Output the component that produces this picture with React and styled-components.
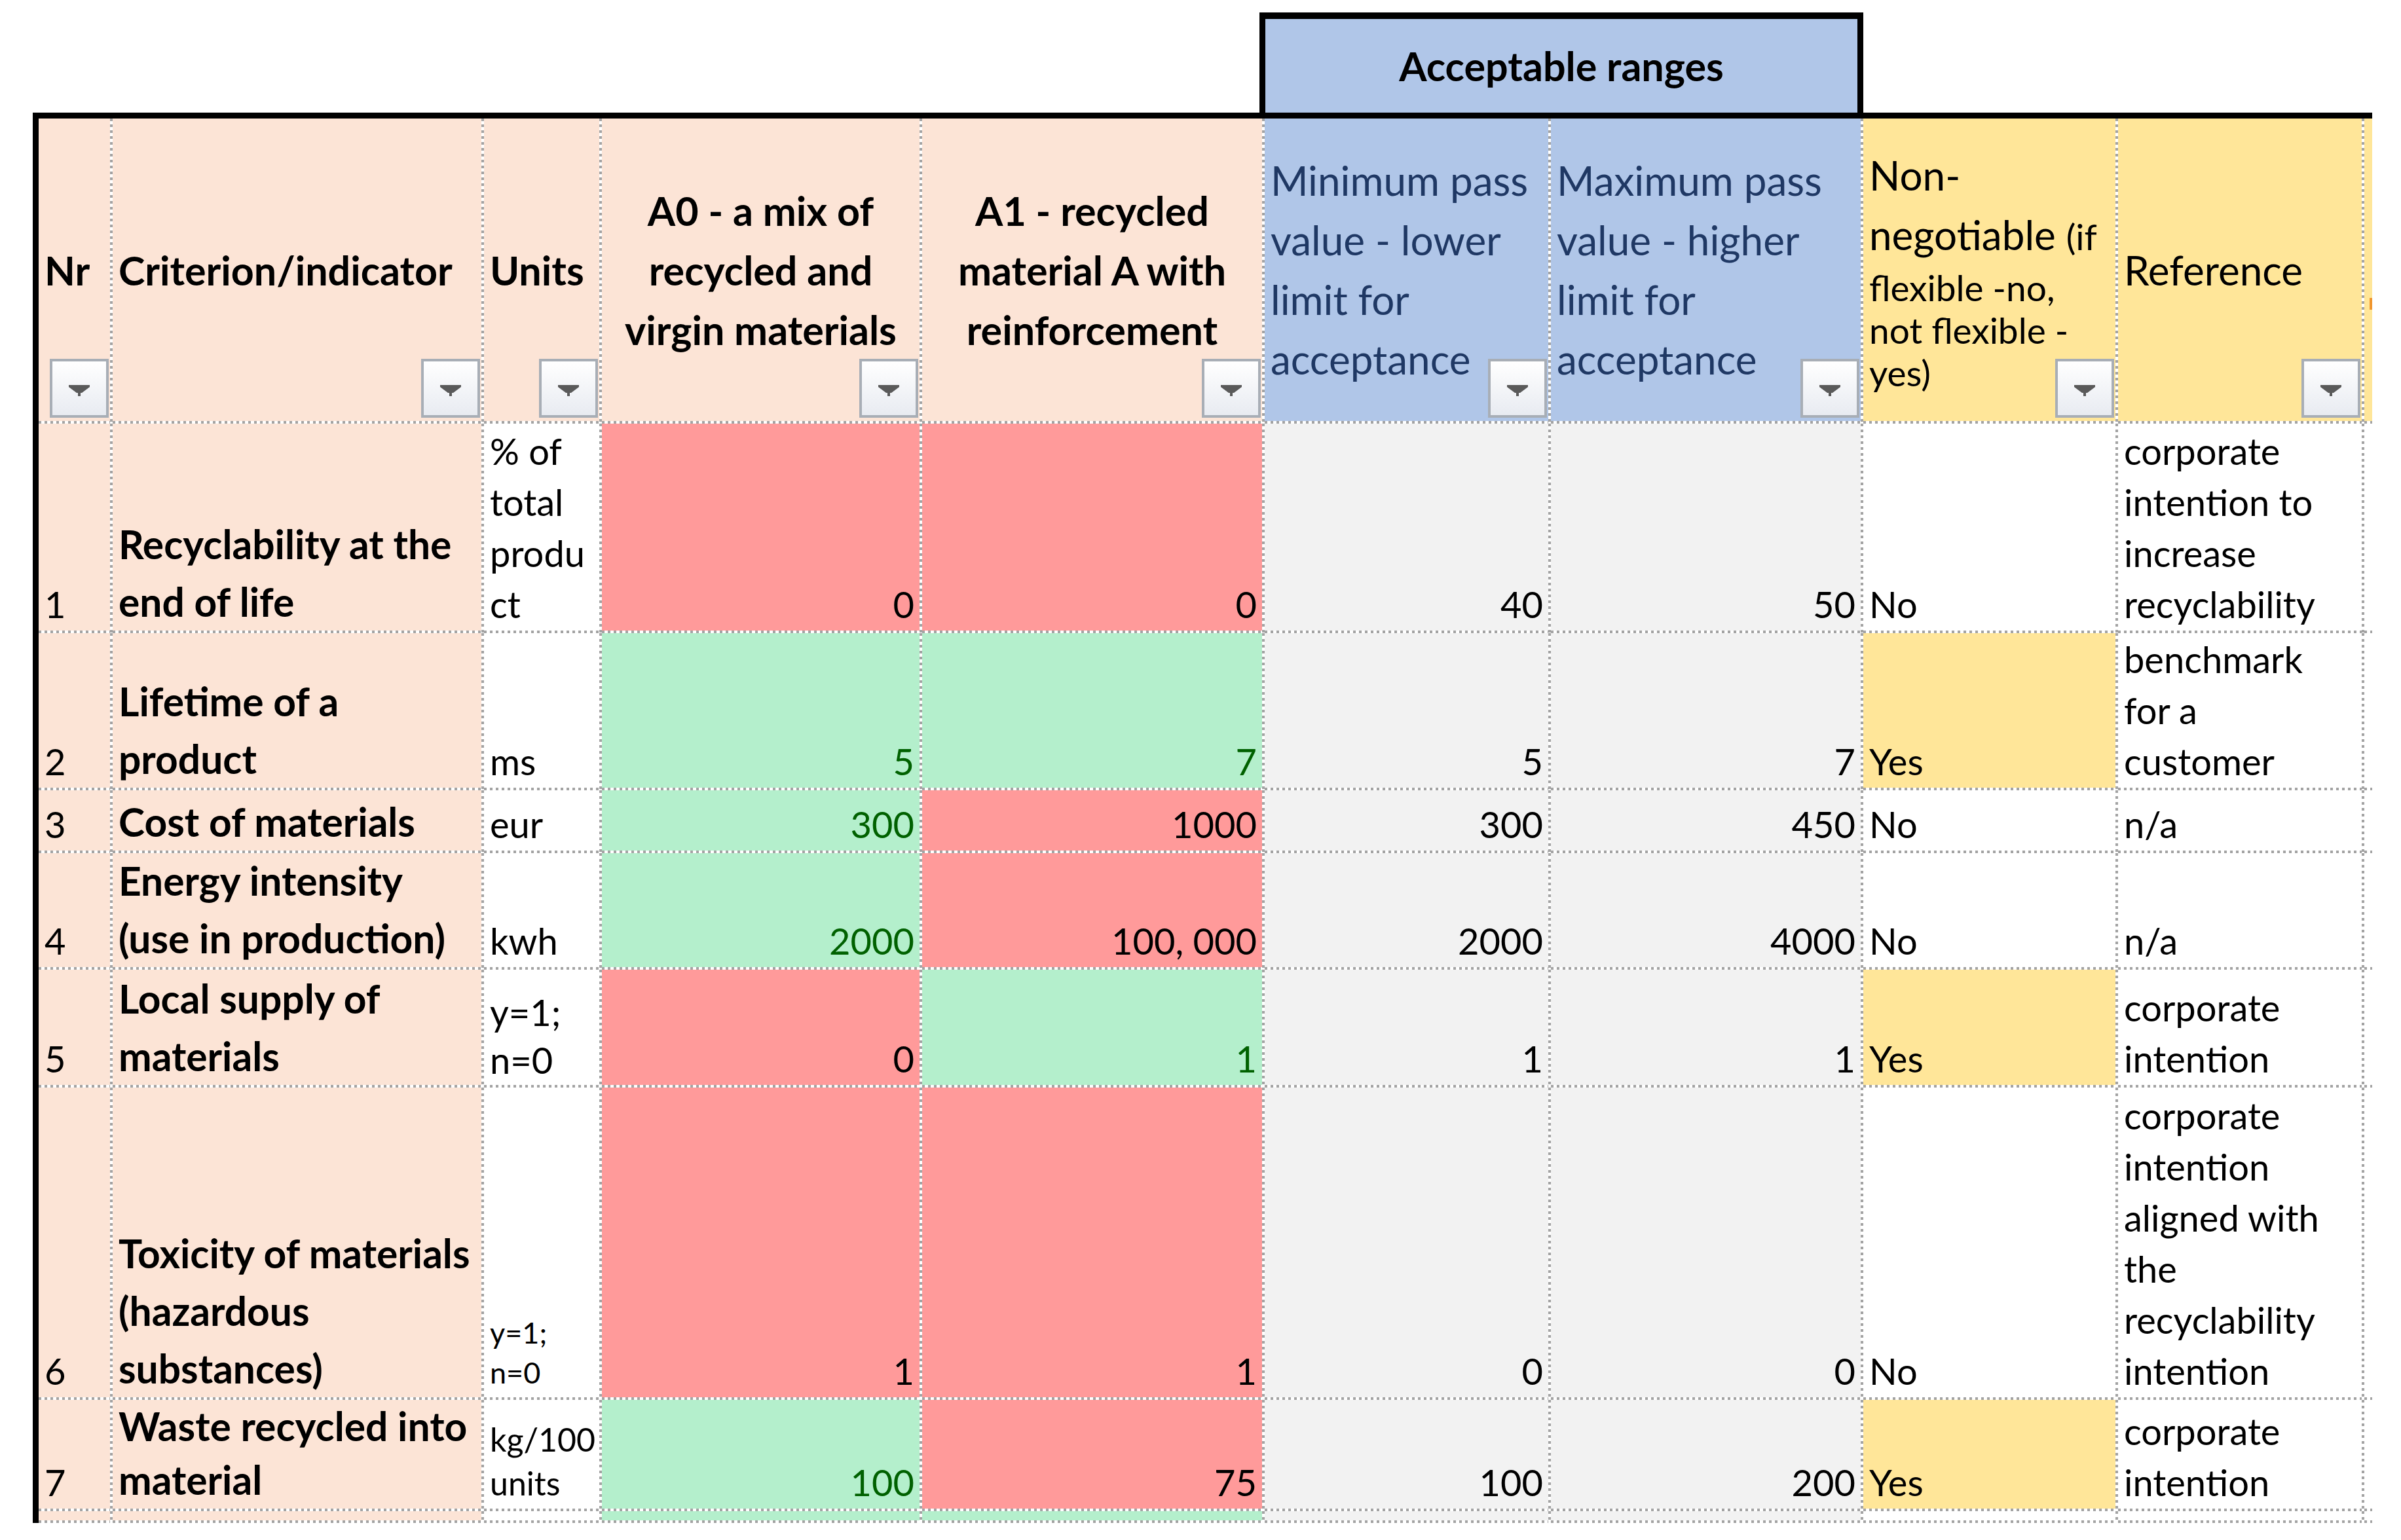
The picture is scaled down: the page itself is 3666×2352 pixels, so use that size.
import React from 'react';
import styled, { createGlobalStyle } from 'styled-components';

const FONT = `Lato, "Liberation Sans", "DejaVu Sans", sans-serif`;

const C = {
  peach: '#FCE4D6',
  blue: '#B0C6E8',
  yellow: '#FFE699',
  red: '#FF9A9A',
  green: '#B4EFCC',
  gray: '#F2F2F2',
  white: '#FFFFFF',
  dot: '#A3A3A3',
  navy: '#1F3864',
  goodText: '#006100',
};

const GlobalStyle = createGlobalStyle`
  html, body { margin: 0; padding: 0; background: #ffffff; }
  body { font-family: ${FONT}; color: #000; }
  #root { width: 3666px; height: 2352px; overflow: hidden; }
`;

const COLUMNS = [113, 567, 180, 489, 523, 437, 477, 389, 376, 80];
const COL_TEMPLATE = COLUMNS.map((w) => `${w}px`).join(' ');
const ROW_TEMPLATE = '466px 320px 240px 96px 178px 180px 477px 170px 18px';

const Page = styled.main`
  box-sizing: border-box;
  width: 3666px;
  height: 2352px;
  padding: 19px 0 0 50px;
  overflow: hidden;
  background: #fff;
`;

const GroupBand = styled.div`
  display: grid;
  grid-template-columns: 9px ${COL_TEMPLATE};
  height: 153px;
`;

const RangeBox = styled.div`
  grid-column: 7 / 9;
  margin-left: -8px;
  box-sizing: border-box;
  border: 9px solid #000;
  border-top-width: 10px;
  border-bottom: none;
  background: ${C.blue};
  display: flex;
  align-items: center;
  justify-content: center;
  font-size: 61px;
  font-weight: 700;
  line-height: 91px;
  white-space: nowrap;
`;

const Sheet = styled.div`
  display: grid;
  grid-template-columns: ${COL_TEMPLATE};
  grid-template-rows: ${ROW_TEMPLATE};
  box-sizing: border-box;
  width: 3572px;
  border-top: 9px solid #000;
  border-left: 9px solid #000;
  overflow: hidden;
`;

const ALIGN = { left: 'flex-start', right: 'flex-end', center: 'center' };

const Cell = styled.div`
  position: relative;
  box-sizing: border-box;
  min-width: 0;
  display: flex;
  flex-direction: column;
  justify-content: ${(p) => (p.$middle ? 'center' : 'flex-end')};
  align-items: ${(p) => ALIGN[p.$align || 'left']};
  padding: ${(p) =>
    p.$align === 'right' ? '0 12px 4px 4px' : p.$align === 'center' ? '0 4px 4px 0' : '0 4px 4px 9px'};
  overflow: hidden;
  white-space: nowrap;
  background:
    repeating-linear-gradient(to bottom, ${C.dot} 0 4px, #fff 4px 9px) right top / 4px 100% no-repeat,
    repeating-linear-gradient(to right, ${C.dot} 0 4px, #fff 4px 9px) left bottom / 100% 4px no-repeat,
    ${(p) => p.$bg || C.white};
`;

const Line = styled.span`
  display: block;
`;

const HeadText = styled.div`
  font-size: ${(p) => (p.$bold ? 61 : 62)}px;
  line-height: 91px;
  font-weight: ${(p) => (p.$bold ? 700 : 400)};
  color: ${(p) => p.$color || '#000'};
  text-align: ${(p) => (p.$center ? 'center' : 'left')};
`;

const SmallInline = styled.span`
  font-size: 55px;
`;

const SmallLine = styled.span`
  display: block;
  font-size: 55px;
  line-height: 65px;
`;

const CutGlyph = styled.span`
  position: absolute;
  left: 8px;
  top: 274px;
  width: 4px;
  height: 18px;
  background: #f0962e;
`;

const PlainText = styled.div`
  font-size: 56px;
  line-height: 78px;
  color: ${(p) => p.$color || '#000'};
  margin-bottom: 1px;
`;

const CriterionLine = styled.span`
  display: block;
  line-height: 64px;
`;

const CriterionText = styled.div`
  font-size: 60.5px;
  font-weight: 700;
  margin-bottom: 12px;
  ${CriterionLine} + ${CriterionLine} {
    margin-top: ${(p) => (p.$gap || 88) - 64}px;
  }
`;

const UNIT_SIZES = {
  normal: { size: 56, lh: 78, mb: 1 },
  medium: { size: 56, lh: 73, mb: 2 },
  small: { size: 50, lh: 67, mb: 5 },
  tiny: { size: 45, lh: 61, mb: 7 },
};

const UnitsText = styled.div`
  font-size: ${(p) => UNIT_SIZES[p.$kind].size}px;
  line-height: ${(p) => UNIT_SIZES[p.$kind].lh}px;
  margin-bottom: ${(p) => UNIT_SIZES[p.$kind].mb}px;
`;

const FilterButton = styled.span`
  position: absolute;
  right: 6px;
  bottom: 9px;
  width: 90px;
  height: 90px;
  box-sizing: border-box;
  border: 4px solid #a8aeb6;
  background: linear-gradient(#ffffff, #e8ebf1);
  display: flex;
  align-items: center;
  justify-content: center;
  padding-top: 6px;
`;

const FilterArrow = () => (
  <svg width="32" height="17" viewBox="0 0 32 17" aria-hidden="true">
    <polygon points="0,0 32,0 32,3 20,12 18,12 18,17 14,17 14,12 12,12 0,3" fill="#5a5a5a" />
  </svg>
);

const Filter = () => (
  <FilterButton>
    <FilterArrow />
  </FilterButton>
);

const Lines = ({ lines }) => lines.map((l, i) => <Line key={i}>{l}</Line>);

const ROWS = [
  {
    nr: '1',
    crit: ['Recyclability at the', 'end of life'],
    units: ['% of', 'total', 'produ', 'ct'],
    unitKind: 'normal',
    a0: ['0', false],
    a1: ['0', false],
    min: '40',
    max: '50',
    flag: 'No',
    ref: ['corporate', 'intention to', 'increase', 'recyclability'],
  },
  {
    nr: '2',
    crit: ['Lifetime of a', 'product'],
    units: ['ms'],
    unitKind: 'normal',
    a0: ['5', true],
    a1: ['7', true],
    min: '5',
    max: '7',
    flag: 'Yes',
    ref: ['benchmark', 'for a', 'customer'],
  },
  {
    nr: '3',
    crit: ['Cost of materials'],
    units: ['eur'],
    unitKind: 'normal',
    a0: ['300', true],
    a1: ['1000', false],
    min: '300',
    max: '450',
    flag: 'No',
    ref: ['n/a'],
  },
  {
    nr: '4',
    crit: ['Energy intensity', '(use in production)'],
    units: ['kwh'],
    unitKind: 'normal',
    a0: ['2000', true],
    a1: ['100, 000', false],
    min: '2000',
    max: '4000',
    flag: 'No',
    ref: ['n/a'],
  },
  {
    nr: '5',
    crit: ['Local supply of', 'materials'],
    units: ['y=1;', 'n=0'],
    unitKind: 'medium',
    a0: ['0', false],
    a1: ['1', true],
    min: '1',
    max: '1',
    flag: 'Yes',
    ref: ['corporate', 'intention'],
  },
  {
    nr: '6',
    crit: ['Toxicity of materials', '(hazardous', 'substances)'],
    units: ['y=1;', 'n=0'],
    unitKind: 'tiny',
    a0: ['1', false],
    a1: ['1', false],
    min: '0',
    max: '0',
    flag: 'No',
    ref: ['corporate', 'intention', 'aligned with', 'the', 'recyclability', 'intention'],
  },
  {
    nr: '7',
    crit: ['Waste recycled into', 'material'],
    critGap: 82,
    units: ['kg/100', 'units'],
    unitKind: 'small',
    a0: ['100', true],
    a1: ['75', false],
    min: '100',
    max: '200',
    flag: 'Yes',
    ref: ['corporate', 'intention'],
  },
];

const ScoreCell = ({ value, good }) => (
  <Cell $bg={good ? C.green : C.red} $align="right">
    <PlainText $color={good ? C.goodText : '#000'}>{value}</PlainText>
  </Cell>
);

const HeaderRow = () => (
  <>
    <Cell $bg={C.peach} $middle>
      <HeadText $bold>Nr</HeadText>
      <Filter />
    </Cell>
    <Cell $bg={C.peach} $middle>
      <HeadText $bold>Criterion/indicator</HeadText>
      <Filter />
    </Cell>
    <Cell $bg={C.peach} $middle>
      <HeadText $bold>Units</HeadText>
      <Filter />
    </Cell>
    <Cell $bg={C.peach} $middle $align="center">
      <HeadText $bold $center>
        <Lines lines={['A0 - a mix of', 'recycled and', 'virgin materials']} />
      </HeadText>
      <Filter />
    </Cell>
    <Cell $bg={C.peach} $middle $align="center">
      <HeadText $bold $center>
        <Lines lines={['A1 - recycled', 'material A with', 'reinforcement']} />
      </HeadText>
      <Filter />
    </Cell>
    <Cell $bg={C.blue} $middle>
      <HeadText $color={C.navy}>
        <Lines lines={['Minimum pass', 'value - lower', 'limit for', 'acceptance']} />
      </HeadText>
      <Filter />
    </Cell>
    <Cell $bg={C.blue} $middle>
      <HeadText $color={C.navy}>
        <Lines lines={['Maximum pass', 'value - higher', 'limit for', 'acceptance']} />
      </HeadText>
      <Filter />
    </Cell>
    <Cell $bg={C.yellow} $middle>
      <HeadText>
        <Line>Non-</Line>
        <Line>
          negotiable <SmallInline>(if</SmallInline>
        </Line>
        <SmallLine>flexible -no,</SmallLine>
        <SmallLine>not flexible -</SmallLine>
        <SmallLine>yes)</SmallLine>
      </HeadText>
      <Filter />
    </Cell>
    <Cell $bg={C.yellow} $middle>
      <HeadText>Reference</HeadText>
      <Filter />
    </Cell>
    <Cell $bg={C.yellow}>
      <CutGlyph />
    </Cell>
  </>
);

const DataRow = ({ row }) => (
  <>
    <Cell $bg={C.peach}>
      <PlainText>{row.nr}</PlainText>
    </Cell>
    <Cell $bg={C.peach}>
      <CriterionText $gap={row.critGap}>
        {row.crit.map((l, i) => (
          <CriterionLine key={i}>{l}</CriterionLine>
        ))}
      </CriterionText>
    </Cell>
    <Cell>
      <UnitsText $kind={row.unitKind}>
        <Lines lines={row.units} />
      </UnitsText>
    </Cell>
    <ScoreCell value={row.a0[0]} good={row.a0[1]} />
    <ScoreCell value={row.a1[0]} good={row.a1[1]} />
    <Cell $bg={C.gray} $align="right">
      <PlainText>{row.min}</PlainText>
    </Cell>
    <Cell $bg={C.gray} $align="right">
      <PlainText>{row.max}</PlainText>
    </Cell>
    <Cell $bg={row.flag === 'Yes' ? C.yellow : C.white}>
      <PlainText>{row.flag}</PlainText>
    </Cell>
    <Cell>
      <PlainText>
        <Lines lines={row.ref} />
      </PlainText>
    </Cell>
    <Cell />
  </>
);

const TrailingRow = () => (
  <>
    <Cell $bg={C.peach} />
    <Cell $bg={C.peach} />
    <Cell />
    <Cell $bg={C.green} />
    <Cell $bg={C.green} />
    <Cell $bg={C.gray} />
    <Cell $bg={C.gray} />
    <Cell />
    <Cell />
    <Cell />
  </>
);

export default function App() {
  return (
    <>
      <GlobalStyle />
      <Page>
        <GroupBand>
          <RangeBox>Acceptable ranges</RangeBox>
        </GroupBand>
        <Sheet>
          <HeaderRow />
          {ROWS.map((r) => (
            <DataRow key={r.nr} row={r} />
          ))}
          <TrailingRow />
        </Sheet>
      </Page>
    </>
  );
}
